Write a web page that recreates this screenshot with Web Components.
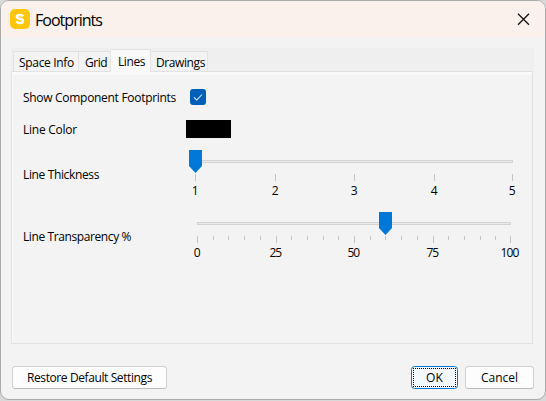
<!DOCTYPE html>
<html lang="en">
<head>
<meta charset="utf-8">
<title>Footprints</title>
<style>
html,body{margin:0;height:100%;background:#d9d9d9;overflow:hidden}
body{font:12px/16px "Open Sans","Noto Sans",sans-serif;color:#000}
</style>
</head>
<body>
<footprint-dialog></footprint-dialog>
<script>
const define = (name, html, setup) => {
  const t = document.createElement('template');
  t.innerHTML = html;
  customElements.define(name, class extends HTMLElement {
    connectedCallback() {
      if (this.shadowRoot) return;
      this.attachShadow({mode: 'open'}).append(t.content.cloneNode(true));
      if (setup) setup.call(this, this.shadowRoot);
    }
  });
};

// A single line of text, tracked to a requested width.
define('fit-text', `<style>:host{display:inline-block;white-space:nowrap}span{display:inline-block}</style><span><slot></slot></span>`, function (root) {
  const span = root.querySelector('span');
  const want = +this.getAttribute('w');
  const n = this.textContent.length;
  this.style.width = want + 'px';
  span.style.letterSpacing = (want - span.getBoundingClientRect().width) / n + 'px';
});

define('title-bar', `<style>
:host{display:flex;align-items:center;height:36px;padding:0 15px 0 9px;background:#faf0ec;font-size:16px;line-height:22px}
.t{margin-left:5px;padding-top:1px}.x{margin-left:auto}svg{display:block}
</style>
<svg width="20" height="20" viewBox="0 0 20 20"><rect width="20" height="20" rx="5" fill="#ffc60b"/><path d="M13.1 7.2C12.3 6.2 11.3 5.9 9.9 5.9 8 5.9 6.9 6.6 6.9 7.8 6.9 9.2 8.3 9.5 10 9.8 11.8 10.1 13 10.6 13 11.9 13 13.2 11.8 13.9 9.9 13.9 8.4 13.9 7.2 13.5 6.4 12.5" fill="none" stroke="#fff" stroke-width="2.5"/></svg>
<div class="t"><slot></slot></div>
<svg class="x" width="13" height="13" viewBox="0 0 13 13"><path d="M1 .7 12 11.7M12 .7 1 11.7" stroke="#111" stroke-width="1.25" fill="none"/></svg>`);

define('tab-item', `<style>
:host{display:block;box-sizing:border-box;height:20px;border:1px solid #e2e2e2;border-left-width:0;border-bottom:0;background:#f3f3f3;padding:3px 0 0 5px}
:host([first]){border-left-width:1px}
:host([active]){height:23px;margin-bottom:-1px;background:#f9f9f9;padding:4px 0 0 7px}
</style><slot></slot>`);

define('tab-strip', `<style>
:host{display:flex;align-items:flex-end;height:23px;padding-left:2px;background:#efefef;position:relative;z-index:1}
</style><slot></slot>`);

define('check-box', `<style>:host{display:block}svg{display:block}</style>
<svg width="16" height="16" viewBox="0 0 16 16"><rect width="16" height="16" rx="3" fill="#005fb8"/><path d="M4 8.3 6.7 11 12 5.5" fill="none" stroke="#e8f2fa" stroke-width="1.05"/></svg>`);

define('color-swatch', `<style>:host{display:block;width:45px;height:18px;background:#000}</style>`);

define('range-slider', `<style>:host{display:block}svg{display:block;overflow:visible}</style><svg width="340" height="49"></svg>`, function (root) {
  const ticks = this.getAttribute('ticks').split(',').map(Number);
  const labels = this.getAttribute('labels').split(',');
  const every = +this.getAttribute('every');
  const [a, b] = this.getAttribute('track').split(',').map(Number);
  const p = +this.getAttribute('thumb');
  let s = `<rect x="${a + .5}" y="10.5" width="${b - a - 1}" height="2" fill="#e7eaea" stroke="#d3d3d3"/>`;
  ticks.forEach((x, i) => {
    s += `<rect x="${x}" y="24" width="1" height="${i % every ? 4 : 7}" fill="#c3c3c3"/>`;
    if (i % every === 0) {
      const l = labels[i / every], w = l.length * 6.3;
      s += `<text x="${x - .1 - w / 2}" y="45" textLength="${w}" font-size="12">${l}</text>`;
    }
  });
  s += `<path d="M${p} 0h13v16l-6.5 7-6.5-7z" fill="#0078d7"/>`;
  root.querySelector('svg').innerHTML = s;
});

define('setting-row', `<style>
:host{display:grid;grid-template-columns:163px 1fr;align-items:start}
.l{padding-top:var(--label-top,0)}
</style><div class="l"><slot name="label"></slot></div><slot></slot>`);

define('push-button', `<style>
:host{display:flex;justify-content:center;align-items:center;box-sizing:border-box;height:23px;border:1px solid #d0d0d0;border-bottom-color:#bbb;border-radius:3.5px;background:#fdfdfd}
:host([default]){border-color:#0078d4;background:#f3f9fd;padding:1px}
div{display:flex;justify-content:center;align-items:center}
:host([default]) div{box-sizing:border-box;width:100%;height:100%;border:1px dotted #000}
</style><div><slot></slot></div>`);

define('footprint-dialog', `<style>
:host{display:block;box-sizing:border-box;width:546px;height:400px;border:1px solid #aaa;border-radius:9px;background:#f3f3f3;overflow:hidden}
.tabs{margin:11px 11px 0 10px}
.panel{box-sizing:border-box;width:522px;height:273px;border:1px solid #e2e2e2;box-shadow:inset 0 3px #f9f9f9,inset 1px 0 #f9f9f9;padding:17px 0 0 11px}
.color{margin-top:14px}.thick{margin-top:12px}.trans{margin-top:13px}
.check{--label-top:1px}.color{--label-top:2px}.thick,.trans{--label-top:17px}
check-box{margin-left:4px}
.actions{display:grid;grid-template-columns:155px 1fr 47px 69px;column-gap:7px;padding:22px 11px 0 11px}
.ok{grid-column:3}
</style>
<title-bar><fit-text w="67">Footprints</fit-text></title-bar>
<div class="tabs">
<tab-strip>
<tab-item first style="width:66px"><fit-text w="55">Space Info</fit-text></tab-item>
<tab-item style="width:32px;padding-left:6px"><fit-text w="22">Grid</fit-text></tab-item>
<tab-item active style="width:40px"><fit-text w="27">Lines</fit-text></tab-item>
<tab-item style="width:57px"><fit-text w="49">Drawings</fit-text></tab-item>
</tab-strip>
<div class="panel">
<setting-row class="check"><fit-text slot="label" w="153">Show Component Footprints</fit-text><check-box></check-box></setting-row>
<setting-row class="color"><fit-text slot="label" w="54">Line Color</fit-text><color-swatch></color-swatch></setting-row>
<setting-row class="thick"><fit-text slot="label" w="76">Line Thickness</fit-text>
<range-slider track="10,327" thumb="3" every="1" ticks="9,89,168,248,326" labels="1,2,3,4,5"></range-slider></setting-row>
<setting-row class="trans"><fit-text slot="label" w="108">Line Transparency %</fit-text>
<range-slider track="11,325" thumb="193" every="5" ticks="11,27,42,58,74,90,105,121,137,152,168,184,199,215,231,247,262,278,294,309,324" labels="0,25,50,75,100"></range-slider></setting-row>
</div>
</div>
<div class="actions">
<push-button><fit-text w="125">Restore Default Settings</fit-text></push-button>
<push-button class="ok" default><fit-text w="17">OK</fit-text></push-button>
<push-button><fit-text w="37">Cancel</fit-text></push-button>
</div>`);
</script>
</body>
</html>
